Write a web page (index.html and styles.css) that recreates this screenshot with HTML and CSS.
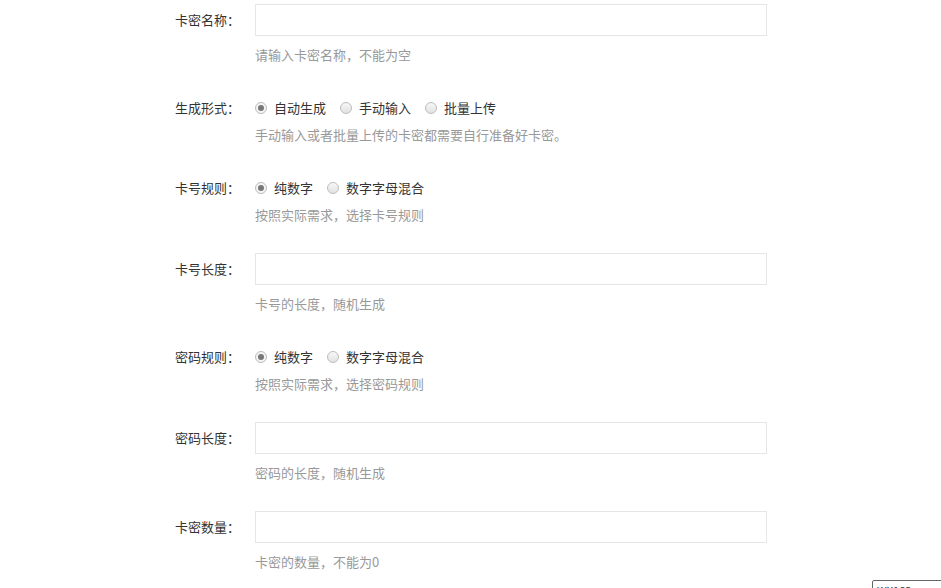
FILE: index.html
```html
<!DOCTYPE html>
<html lang="zh-CN">
<head>
<meta charset="utf-8">
<title>卡密生成</title>
<link rel="stylesheet" href="styles.css">
</head>
<body>
<form class="form">
  <div class="row">
    <label class="label label-input">卡密名称：</label>
    <div class="field">
      <input class="text-input" type="text">
      <p class="help help-input">请输入卡密名称，不能为空</p>
    </div>
  </div>
  <div class="row">
    <label class="label label-radio">生成形式：</label>
    <div class="field">
      <div class="radios">
        <label class="opt"><input type="radio" name="mode" checked><span>自动生成</span></label>
        <label class="opt"><input type="radio" name="mode"><span>手动输入</span></label>
        <label class="opt"><input type="radio" name="mode"><span>批量上传</span></label>
      </div>
      <p class="help help-radio">手动输入或者批量上传的卡密都需要自行准备好卡密。</p>
    </div>
  </div>
  <div class="row">
    <label class="label label-radio">卡号规则：</label>
    <div class="field">
      <div class="radios">
        <label class="opt"><input type="radio" name="cardrule" checked><span>纯数字</span></label>
        <label class="opt"><input type="radio" name="cardrule"><span>数字字母混合</span></label>
      </div>
      <p class="help help-radio">按照实际需求，选择卡号规则</p>
    </div>
  </div>
  <div class="row">
    <label class="label label-input">卡号长度：</label>
    <div class="field">
      <input class="text-input" type="text">
      <p class="help help-input">卡号的长度，随机生成</p>
    </div>
  </div>
  <div class="row">
    <label class="label label-radio">密码规则：</label>
    <div class="field">
      <div class="radios">
        <label class="opt"><input type="radio" name="pwdrule" checked><span>纯数字</span></label>
        <label class="opt"><input type="radio" name="pwdrule"><span>数字字母混合</span></label>
      </div>
      <p class="help help-radio">按照实际需求，选择密码规则</p>
    </div>
  </div>
  <div class="row">
    <label class="label label-input">密码长度：</label>
    <div class="field">
      <input class="text-input" type="text">
      <p class="help help-input">密码的长度，随机生成</p>
    </div>
  </div>
  <div class="row">
    <label class="label label-input">卡密数量：</label>
    <div class="field">
      <input class="text-input" type="text">
      <p class="help help-input">卡密的数量，不能为0</p>
    </div>
  </div>
</form>
<div class="corner-tag">WX163.cn</div>
</body>
</html>
```
FILE: styles.css
```css
html, body {
  margin: 0;
  padding: 0;
  background: #fff;
}
body {
  font-family: "Microsoft YaHei", "Noto Sans CJK SC", "Noto Sans", sans-serif;
  font-size: 13px;
  color: #333;
  padding-top: 4px;
  position: relative;
  min-height: 600px;
}
.form {
  display: flex;
  flex-direction: column;
  gap: 28px;
}
.row {
  display: grid;
  grid-template-columns: 240px 512px;
  column-gap: 15px;
  align-items: start;
}
.label {
  text-align: right;
  white-space: nowrap;
  color: #333;
}
.label-input { line-height: 32px; }
.label-radio { line-height: 26px; padding-top: 2px; }
.field {
  display: flex;
  flex-direction: column;
}
.text-input {
  box-sizing: border-box;
  width: 512px;
  height: 32px;
  margin: 0;
  border: 1px solid #e6e6e6;
  background: #fff;
  outline: none;
  padding: 0 10px;
  font: inherit;
}
.help {
  margin: 0;
  line-height: 20px;
  color: #999;
  white-space: nowrap;
}
.help-input { margin-top: 9px; }
.help-radio { margin-top: 4px; }
.radios {
  box-sizing: border-box;
  height: 28px;
  padding-top: 2px;
  display: flex;
  align-items: center;
  gap: 14px;
}
.opt {
  display: flex;
  align-items: center;
  gap: 7px;
  color: #333;
  line-height: 26px;
}
.opt input {
  appearance: none;
  -webkit-appearance: none;
  box-sizing: border-box;
  width: 12px;
  height: 12px;
  margin: 0;
  border: 1px solid #bdbdbd;
  border-radius: 50%;
  background: linear-gradient(#f7f7f7, #e2e2e2);
  position: relative;
}
.opt input:checked {
  background: #f4f4f4;
}
.opt input:checked::after {
  content: "";
  position: absolute;
  left: 2px;
  top: 2px;
  width: 6px;
  height: 6px;
  border-radius: 50%;
  background: #777;
}
.corner-tag {
  position: absolute;
  left: 872px;
  top: 580px;
  width: 80px;
  height: 20px;
  box-sizing: border-box;
  border: 1px solid #666;
  border-radius: 2px;
  background: #fff;
  font-size: 11px;
  line-height: 14px;
  padding: 2px 4px;
  color: #333;
  overflow: hidden;
}
```
